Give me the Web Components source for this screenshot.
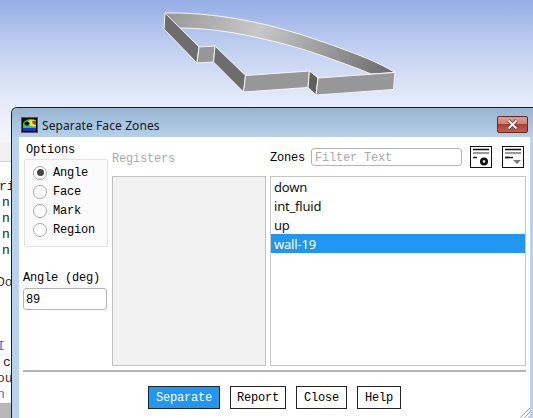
<!DOCTYPE html>
<html>
<head>
<meta charset="utf-8">
<title>Separate Face Zones</title>
<style>
  html, body { margin: 0; padding: 0; overflow: hidden; }
</style>
</head>
<body>
<x-desktop>
  <x-model slot="scene"></x-model>
  <x-behind slot="scene"></x-behind>
  <x-dialog slot="window" heading="Separate Face Zones">
    <x-separate-panel></x-separate-panel>
  </x-dialog>
</x-desktop>

<script>
const mono = `"Liberation Mono", monospace`;
const ui = `"Noto Sans", sans-serif`;

class XDesktop extends HTMLElement {
  constructor() {
    super();
    this.attachShadow({ mode: 'open' }).innerHTML = `
    <style>
      :host { display: block; width: 533px; height: 418px; position: relative; overflow: hidden;
        background: linear-gradient(#96aee6 0, #c6d4f2 55px, #e4eaf9 100px, #f4f6fc 142px); }
      .window { position: absolute; left: 11px; top: 107px; right: 0; bottom: 0; display: flex; }
    </style>
    <slot name="scene"></slot>
    <div class="window"><slot name="window"></slot></div>`;
  }
}

class XModel extends HTMLElement {
  constructor() {
    super();
    this.attachShadow({ mode: 'open' }).innerHTML = `
    <style>
      :host { position: absolute; left: 0; top: 0; width: 533px; height: 107px; display: block; }
      svg { display: block; }
      path { stroke: #f4f6fb; stroke-width: 1; stroke-linejoin: round; }
    </style>
    <svg width="533" height="107" viewBox="0 0 533 107">
      <defs>
        <linearGradient id="ring" gradientUnits="userSpaceOnUse" x1="165" y1="20" x2="395" y2="70">
          <stop offset="0" stop-color="#979797"/>
          <stop offset=".4" stop-color="#c8c8c8"/>
          <stop offset=".72" stop-color="#969696"/>
          <stop offset="1" stop-color="#6a6a6a"/>
        </linearGradient>
      </defs>
      <path fill="url(#ring)" d="M165 13 C190 12.500 215 15 238 19 C256 22 272 26 289 31 C307 36 323 42 340 48 C359 55 378 62 395 72.500 L371 74 C355 67 339 62 323 56 C306 50 289 45 272 41 C255 37 238 33 221 31 C207 29 193 28 180 28 Z"/>
      <path fill="#6d6d6d" d="M165 13 L164 29 L197 63 L199 47 Z"/>
      <path fill="#979797" d="M199 47 L215 46 L213.500 62 L197 63 Z"/>
      <path fill="#6d6d6d" d="M215 46 L245.500 75.500 L243.500 92 L213.500 62 Z"/>
      <path fill="#979797" d="M245.500 75.500 L309.500 71 L308 87.500 L243.500 92 Z"/>
      <path fill="#5f5f5f" d="M309.500 71 L318 78 L316 95 L308 87.500 Z"/>
      <path fill="#979797" d="M318 78 L395 72.500 L393.500 89.500 L316 95 Z"/>
    </svg>`;
  }
}

class XBehind extends HTMLElement {
  constructor() {
    super();
    const rows = [['ri', -1, '#222'], ['n', 2, '#222'], ['n', 2, '#222'], ['n', 2, '#222'], ['n', 2, '#222'],
      ['', 0, '#222'], ['Do', -3, '#333'], ['', 0, '#222'], ['', 0, '#222'], ['', 0, '#222'],
      ['I', -3, '#1e7fd0'], ['c', 3, '#222'], ['ou', -3, '#333'], ['n', -3, '#1e7fd0']];
    this.attachShadow({ mode: 'open' }).innerHTML = `
    <style>
      :host { position: absolute; left: 0; top: 142px; width: 11px; height: 276px; display: flex; flex-direction: column;
        overflow: hidden; background: #fff; font: 13px/16px ${mono}; }
      .band { height: 19px; background: #f0f0f0; border-bottom: 1px solid #cfcfcf; flex: none; }
      .rows { flex: 1; padding-top: 17px; white-space: nowrap; }
      .row { height: 16px; }
      .foot { height: 15px; background: #b8b8b8; flex: none; }
    </style>
    <div class="band"></div>
    <div class="rows">${rows.map(r => `<div class="row" style="margin-left:${r[1]}px;color:${r[2]}">${r[0]}</div>`).join('')}</div>
    <div class="foot"></div>`;
  }
}

class XDialog extends HTMLElement {
  constructor() {
    super();
    this.attachShadow({ mode: 'open' }).innerHTML = `
    <style>
      :host { display: flex; flex-direction: column; flex: 1; min-width: 0; box-sizing: border-box; position: relative;
        border: 1px solid #1c1f24; border-width: 1px 0 0 1px; border-top-left-radius: 6px; background: #b9d3ee; overflow: hidden; }
      .title { height: 29px; box-sizing: border-box; padding: 4px 5px 0 9px; flex: none; display: flex; align-items: center; gap: 4px;
        background: linear-gradient(#99b4d0, #b6d0ea); font: 12px ${ui}; letter-spacing: .1px; color: #101820; }
      .title span { flex: 1; margin-top: 1px; }
      .close { width: 31px; height: 17px; box-sizing: border-box; border: 1px solid #5e2a26; border-radius: 2px;
        background: linear-gradient(#dc9d95 0, #cc8278 45%, #b43c2c 50%, #c4604e 100%); display: flex; align-items: center; justify-content: center; }
      .body { flex: 1; background: #fff; margin: 0 3px 0 7px; min-height: 0; position: relative; }
      .grip { position: absolute; right: 0; bottom: 0; }
    </style>
    <div class="title">
      <svg width="17" height="16" viewBox="0 0 17 16">
        <rect width="17" height="16" fill="#555"/>
        <rect x="1" y="1" width="15" height="14" fill="#000"/>
        <rect x="2" y="11" width="13" height="3" fill="#1a2be0"/>
        <path d="M2 6 C4 2 11 1 15 3 L15 11 L2 11 Z" fill="#1fd43a"/>
        <path d="M7 4 C10 2 14 3 15 5 L15 9 C12 10 9 9 8 8 Z" fill="#ecec20"/>
        <path d="M11 4 L15 4 L15 8 L12 7 Z" fill="#e8241c"/>
        <ellipse cx="6" cy="6.500" rx="2.500" ry="2" fill="#000"/>
      </svg>
      <span>${this.getAttribute('heading')}</span>
      <div class="close">
        <svg width="13" height="11" viewBox="0 0 13 11">
          <path d="M2.500 1.500 L10.500 9.500 M10.500 1.500 L2.500 9.500" stroke="#50302c" stroke-width="3.400" fill="none"/>
          <path d="M2.500 1.500 L10.500 9.500 M10.500 1.500 L2.500 9.500" stroke="#f6f0ee" stroke-width="2.200" fill="none"/>
        </svg>
      </div>
    </div>
    <div class="body">
      <slot></slot>
      <svg class="grip" width="11" height="11" viewBox="0 0 11 11">
        <path d="M1 11 L11 1 M5 11 L11 5 M9 11 L11 9" stroke="#a8a8a8" stroke-width="1" fill="none"/>
      </svg>
    </div>`;
  }
}

class XRadio extends HTMLElement {
  constructor() {
    super();
    this.attachShadow({ mode: 'open' }).innerHTML = `
    <style>
      :host { display: flex; align-items: center; height: 19px; gap: 6px; font: 12px ${mono}; letter-spacing: -.2px; color: #000; }
      .dot { width: 14px; height: 14px; box-sizing: border-box; border: 1px solid #a9a9a9; border-radius: 50%; background: #fff;
        display: flex; align-items: center; justify-content: center; flex: none; }
      :host([checked]) .dot::after { content: ""; width: 7px; height: 7px; border-radius: 50%; background: #444; }
    </style>
    <div class="dot"></div><slot></slot>`;
  }
}

class XButton extends HTMLElement {
  constructor() {
    super();
    this.attachShadow({ mode: 'open' }).innerHTML = `
    <style>
      :host { display: flex; align-items: center; justify-content: center; height: 23px; box-sizing: border-box;
        border: 1px solid #222; background: #fff; color: #000; font: 12px ${mono}; letter-spacing: -.2px; padding: 0 7px; }
      :host([primary]) { background: #2196f3; color: #fff; }
      :host([tight]) { padding: 0 6px; }
    </style>
    <slot></slot>`;
  }
}

class XToolIcon extends HTMLElement {
  constructor() {
    super();
    const add = this.getAttribute('kind') === 'add';
    this.attachShadow({ mode: 'open' }).innerHTML = `
    <style>
      :host { display: block; width: 22px; height: 22px; flex: none; }
      svg { display: block; }
    </style>
    <svg width="22" height="22" viewBox="0 0 22 22">
      <rect x=".5" y=".5" width="21" height="21" fill="#fff" stroke="#111"/>
      <path d="M3 3.500 H19" stroke="#111" stroke-width="1.400"/>
      <path d="M3 7 H19" stroke="#333" stroke-width="1"/>
      <path d="M3 11.500 H7" stroke="#222" stroke-width="1.400"/>
      ${add
        ? `<circle cx="14" cy="15.500" r="4" fill="#111"/><circle cx="14" cy="15.500" r="1.300" fill="#fff"/>`
        : `<path d="M3 11.500 H11" stroke="#222" stroke-width="1.400"/><path d="M11 14 H19 L15 18 Z" fill="#777"/>`}
    </svg>`;
  }
}

class XList extends HTMLElement {
  constructor() {
    super();
    this.attachShadow({ mode: 'open' }).innerHTML = `
    <style>
      :host { display: block; box-sizing: border-box; border: 1px solid #c6c6c6; background: #fff;
        font: 13px/21px ${ui}; color: #111; }
    </style>
    <slot></slot>`;
  }
}

class XListItem extends HTMLElement {
  constructor() {
    super();
    this.attachShadow({ mode: 'open' }).innerHTML = `
    <style>
      :host { display: block; height: 19px; padding-left: 3px; }
      :host([selected]) { background: #2196f3; color: #fff; }
    </style>
    <slot></slot>`;
  }
}

class XSeparatePanel extends HTMLElement {
  constructor() {
    super();
    this.attachShadow({ mode: 'open' }).innerHTML = `
    <style>
      :host { display: flex; flex-direction: column; height: 100%; box-sizing: border-box; padding: 7px 4px 0 4px;
        font: 12px ${mono}; letter-spacing: -.2px; color: #000; }
      .main { display: grid; grid-template-columns: 89px 158px 256px; height: 222px; flex: none; }
      .left { display: flex; flex-direction: column; }
      .legend { margin-left: 3px; line-height: 13px; height: 13px; }
      .options { box-sizing: border-box; width: 84px; height: 88px; margin: 2px 0 0 1px; border: 1px solid #e2e2e2; border-radius: 2px;
        background: #fbfbfb; padding: 3px 0 0 8px; }
      .angle { margin-top: 25px; line-height: 13px; height: 13px; }
      .field { box-sizing: border-box; border: 1px solid #b4b4b4; border-radius: 3px; background: #fff; }
      .value { height: 22px; margin-top: 3px; width: 84px; line-height: 22px; padding-left: 2px; }
      .col { display: flex; flex-direction: column; min-width: 0; }
      .head { height: 26px; margin-bottom: 6px; flex: none; display: flex; align-items: center; }
      .zones { padding-top: 2px; }
      .reg { color: #aaa; padding-top: 3px; height: 23px; }
      .panel { flex: 1; width: 154px; border: 1px solid #c0c0c0; background: #f2f2f2; box-sizing: border-box; }
      .filter { width: 151px; height: 18px; margin-left: 6px; margin-top: -2px; line-height: 18px; color: #aaa; padding-left: 3px; flex: none; }
      .tools { display: flex; gap: 10px; margin-left: 8px; margin-top: -2px; }
      x-list { flex: 1; }
      hr { margin: 4px 0 0; height: 2px; border: 0; background: #b4b4b4; width: 503px; flex: none; }
      .buttons { display: flex; justify-content: center; gap: 10px; margin: 14px 0 0; width: 503px; }
    </style>
    <div class="main">
      <div class="left">
        <div class="legend">Options</div>
        <div class="options">
          <x-radio checked>Angle</x-radio>
          <x-radio>Face</x-radio>
          <x-radio>Mark</x-radio>
          <x-radio>Region</x-radio>
        </div>
        <div class="angle">Angle (deg)</div>
        <div class="field value">89</div>
      </div>
      <div class="col">
        <div class="head reg">Registers</div>
        <div class="panel"></div>
      </div>
      <div class="col">
        <div class="head zones" style="height:24px">Zones
          <div class="field filter">Filter Text</div>
          <div class="tools"><x-tool-icon kind="add"></x-tool-icon><x-tool-icon kind="menu"></x-tool-icon></div>
        </div>
        <x-list>
          <x-list-item>down</x-list-item>
          <x-list-item>int_fluid</x-list-item>
          <x-list-item>up</x-list-item>
          <x-list-item selected>wall-19</x-list-item>
        </x-list>
      </div>
    </div>
    <hr>
    <div class="buttons">
      <x-button primary>Separate</x-button>
      <x-button tight>Report</x-button>
      <x-button>Close</x-button>
      <x-button>Help</x-button>
    </div>`;
  }
}

customElements.define('x-desktop', XDesktop);
customElements.define('x-model', XModel);
customElements.define('x-behind', XBehind);
customElements.define('x-dialog', XDialog);
customElements.define('x-radio', XRadio);
customElements.define('x-button', XButton);
customElements.define('x-tool-icon', XToolIcon);
customElements.define('x-list', XList);
customElements.define('x-list-item', XListItem);
customElements.define('x-separate-panel', XSeparatePanel);
</script>
</body>
</html>
